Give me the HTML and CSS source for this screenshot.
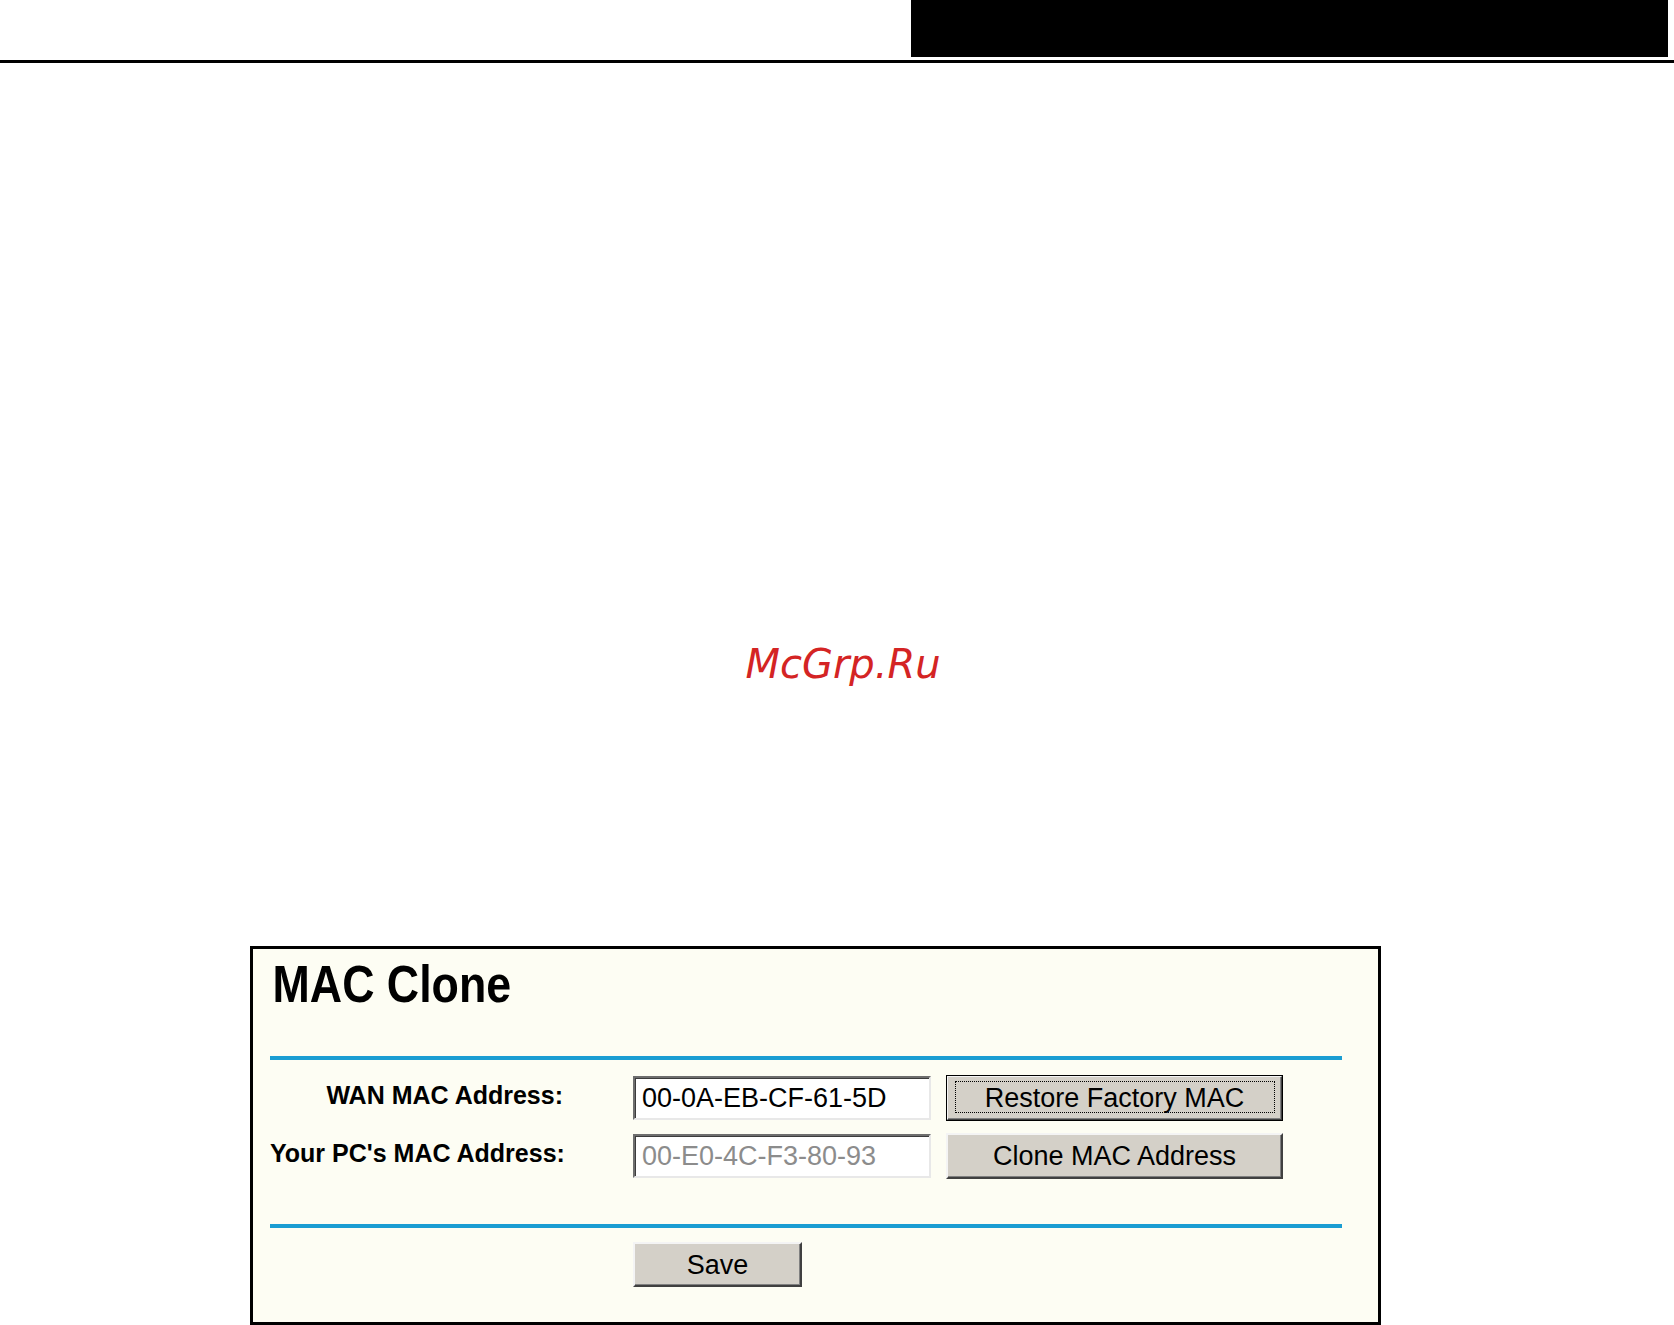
FILE: index.html
```html
<!DOCTYPE html>
<html lang="en">
<head>
<meta charset="utf-8">
<title>MAC Clone</title>
<link rel="stylesheet" href="styles.css">
</head>
<body>
<header class="page-head">
  <div class="head-row"><div class="head-block"></div></div>
  <div class="head-rule"></div>
</header>
<div class="watermark">McGrp.Ru</div>
<section class="panel">
  <h1 class="panel-title"><span>MAC Clone</span></h1>
  <div class="rule"></div>
  <div class="form-grid">
    <label class="label">WAN MAC Address:</label>
    <div class="cell"><input class="field" type="text" value="00-0A-EB-CF-61-5D"></div>
    <div class="cell"><button class="btn btn-default" type="button">Restore Factory MAC</button></div>
    <label class="label">Your PC's MAC Address:</label>
    <div class="cell"><input class="field field-muted" type="text" value="00-E0-4C-F3-80-93" readonly></div>
    <div class="cell"><button class="btn" type="button">Clone MAC Address</button></div>
  </div>
  <div class="rule rule-bottom"></div>
  <div class="save-row"><button class="btn btn-save" type="button">Save</button></div>
</section>
</body>
</html>
```

FILE: styles.css
```css
html, body {
  margin: 0;
  padding: 0;
  background: #ffffff;
  overflow: hidden;
}
body {
  font-family: "Liberation Sans", Arial, sans-serif;
  width: 1674px;
  height: 1325px;
}
.page-head {
  display: flex;
  flex-direction: column;
  gap: 3px;
}
.head-row {
  display: flex;
  padding-left: 911px;
}
.head-block {
  width: 757px;
  height: 57px;
  background: #000;
}
.head-rule {
  height: 3px;
  background: #000;
}
.watermark {
  margin-top: 577px;
  height: 48px;
  line-height: 48px;
  text-align: center;
  padding-left: 12px;
  font-family: "DejaVu Sans", sans-serif;
  font-style: oblique;
  font-size: 40px;
  color: #d42424;
}
.panel {
  margin-top: 258px;
  margin-left: 250px;
  border: 3px solid #000;
  background: #fdfdf3;
  padding: 9px 36px 35px 17px;
  box-sizing: content-box;
  width: 1072px;
}
.panel-title {
  margin: 0;
  height: 52px;
  line-height: 52px;
  font-size: 52px;
  font-weight: bold;
  color: #000;
}
.panel-title span {
  display: inline-block;
  transform: scaleX(0.86);
  transform-origin: left center;
  padding-left: 3px;
}
.rule {
  margin-top: 46px;
  height: 4px;
  background: #1a9dd2;
}
.form-grid {
  margin-top: 15px;
  display: grid;
  grid-template-columns: 363px 313px 337px;
  grid-auto-rows: 46px;
  row-gap: 12px;
  align-items: center;
}
.label {
  padding-right: 70px;
  padding-bottom: 6px;
  text-align: right;
  font-size: 25px;
  font-weight: bold;
  color: #000;
  white-space: nowrap;
}
.cell {
  display: flex;
  align-items: center;
}
.field {
  width: 298px;
  height: 44px;
  box-sizing: border-box;
  margin: 0;
  padding: 0 0 0 7px;
  border: 2px solid;
  border-color: #6e6e6e #e8e8e8 #e8e8e8 #6e6e6e;
  box-shadow: inset 1px 1px 0 #3c3c3c;
  background: #ffffff;
  font-family: "Liberation Sans", Arial, sans-serif;
  font-size: 27px;
  color: #000;
  outline: none;
}
.field-muted {
  color: #8c8c8c;
}
.btn {
  position: relative;
  width: 337px;
  height: 46px;
  box-sizing: border-box;
  margin: 0;
  padding: 0;
  border: 2px solid;
  border-color: #f4f4f4 #404040 #404040 #f4f4f4;
  box-shadow: inset -1px -1px 0 #808080;
  background: #d4d0c8;
  font-family: "Liberation Sans", Arial, sans-serif;
  font-size: 27px;
  color: #000;
  line-height: 40px;
}
.btn-default {
  outline: 1px solid #000;
  outline-offset: -1px;
}
.btn-default::after {
  content: "";
  position: absolute;
  left: 7px;
  right: 6px;
  top: 4px;
  bottom: 6px;
  border: 1px dotted #000;
}
.rule-bottom {
  margin-top: 45px;
}
.save-row {
  margin-top: 14px;
  padding-left: 363px;
  display: flex;
}
.btn-save {
  width: 169px;
  height: 45px;
}
```
